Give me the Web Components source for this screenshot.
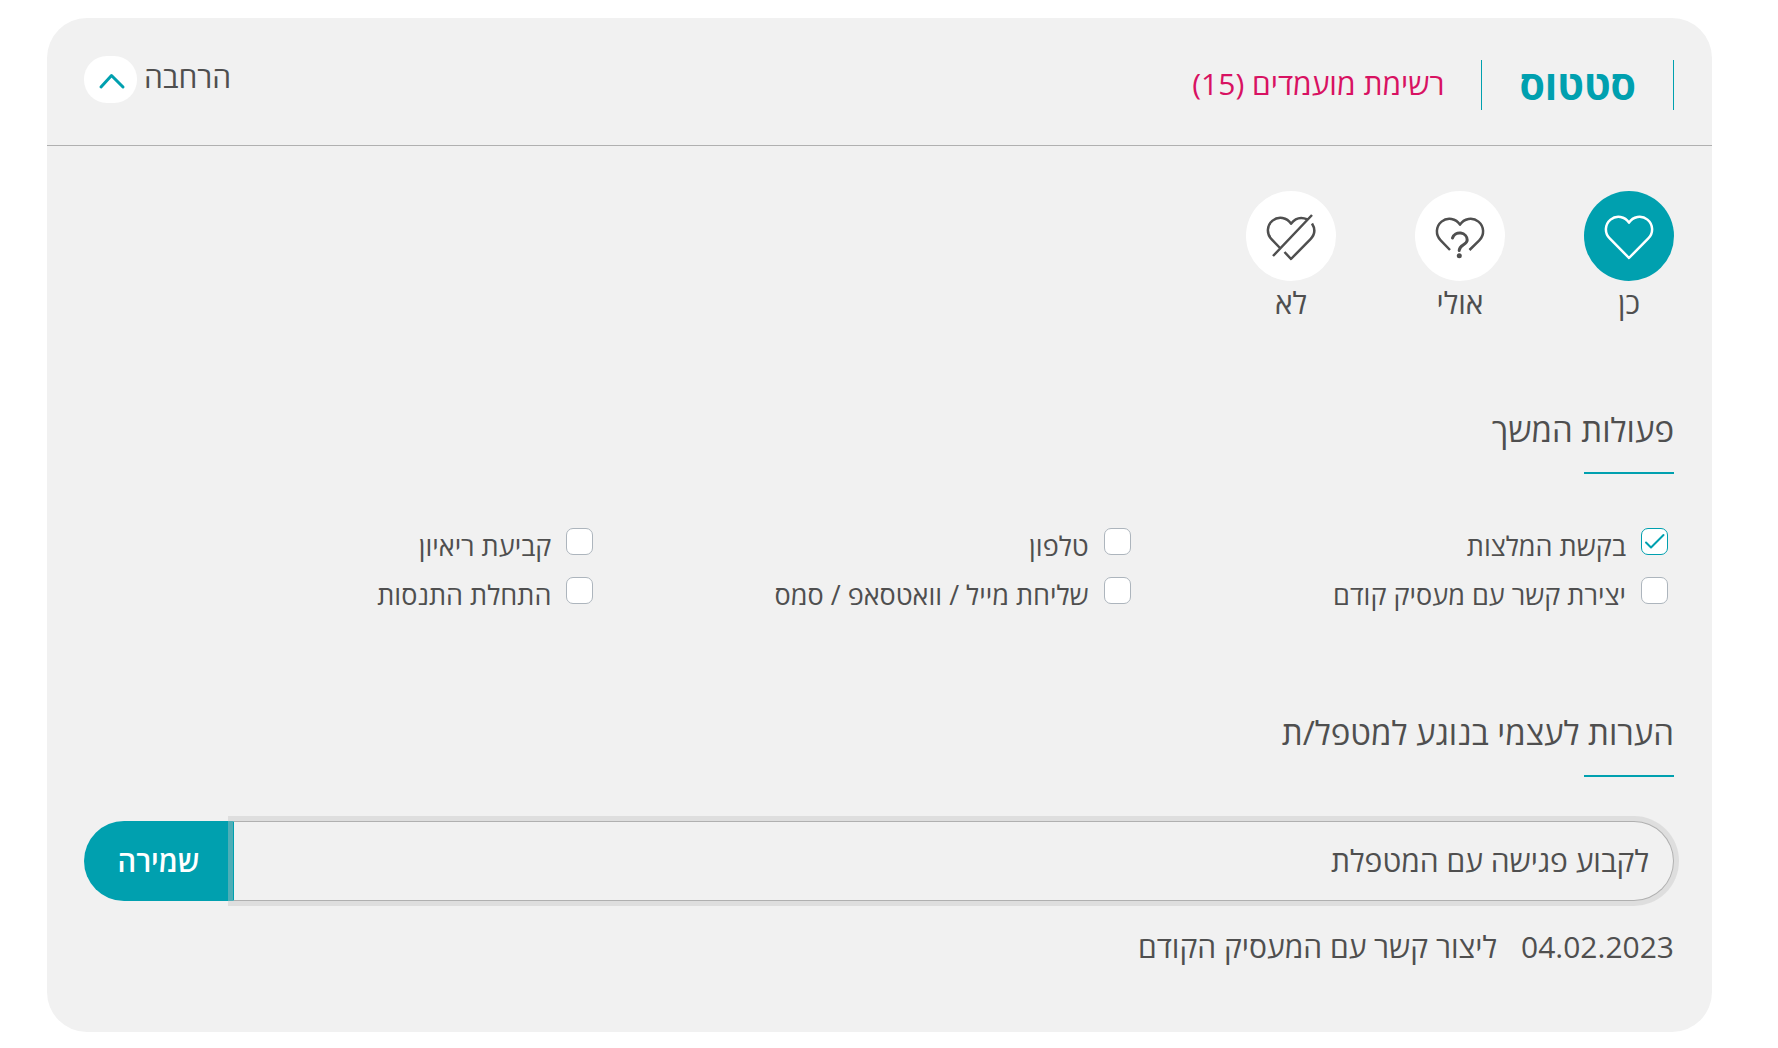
<!DOCTYPE html>
<html lang="he" dir="rtl">
<head>
<meta charset="utf-8">
<meta name="viewport" content="width=device-width, initial-scale=1">
<title>סטטוס</title>
<style>
  :root {
    --teal: #00a0af;
    --pink: #d81262;
    --ink: #4f4f4f;
    --panel: #f1f1f1;
    --line: #b0b0b0;
  }
  body {
    margin: 18px 66px 16px 47px;
    background: #fff;
    color: var(--ink);
    font-family: "Open Sans", "Liberation Sans", sans-serif;
    font-size: 30px;
    line-height: 36px;
  }
</style>
</head>
<body>
<status-panel>
  <panel-header slot="header" heading="סטטוס" link="רשימת מועמדים (15)" toggle="הרחבה"></panel-header>
  <choice-group></choice-group>
  <panel-section heading="פעולות המשך">
    <task-list>
      <task-check label="בקשת המלצות" checked></task-check>
      <task-check label="טלפון"></task-check>
      <task-check label="קביעת ריאיון"></task-check>
      <task-check label="יצירת קשר עם מעסיק קודם"></task-check>
      <task-check label="שליחת מייל / וואטסאפ / סמס"></task-check>
      <task-check label="התחלת התנסות"></task-check>
    </task-list>
  </panel-section>
  <panel-section heading="הערות לעצמי בנוגע למטפל/ת">
    <note-form value="לקבוע פגישה עם המטפלת" action="שמירה"></note-form>
    <note-entry date="04.02.2023">ליצור קשר עם המעסיק הקודם</note-entry>
  </panel-section>
</status-panel>

<script>
  class Base extends HTMLElement {
    connectedCallback() {
      if (this.shadowRoot) return;
      this.attachShadow({ mode: 'open' }).innerHTML =
        '<style>*{box-sizing:border-box}button,input{font:inherit;color:inherit;margin:0}svg{display:block;fill:none;stroke-linecap:round;stroke-linejoin:round}</style>' + this.render();
    }
    attr(name) { return this.getAttribute(name) || ''; }
  }

  customElements.define('status-panel', class extends Base {
    render() {
      return `<style>
        :host { display: block; background: var(--panel); border-radius: 40px; }
        main { display: flex; flex-direction: column; padding: 45px 38px 67px 37px; }
      </style>
      <slot name="header"></slot><main><slot></slot></main>`;
    }
  });

  customElements.define('panel-header', class extends Base {
    render() {
      return `<style>
        :host { display: block; border-bottom: 1px solid var(--line); }
        header { display: flex; justify-content: space-between; align-items: flex-start; padding: 38px 38px 35px 37px; }
        .titles { display: flex; align-items: center; padding-top: 4px; }
        h1 { margin: 0; font-size: 41px; font-weight: 700; line-height: 48px; padding: 0 37px 2px; color: var(--teal);
             border-inline: 1px solid var(--teal); }
        a { color: var(--pink); text-decoration: none; padding-inline-start: 37px; padding-bottom: 2px; }
        button { display: flex; gap: 7px; padding: 0; border: 0; background: none; cursor: pointer; }
        .pill { background: #fff; border-radius: 23px; }
        .pill svg { width: 53px; height: 47px; stroke: var(--teal); stroke-width: 3; }
        .label { line-height: 41px; }
      </style>
      <header>
        <div class="titles"><h1>${this.attr('heading')}</h1><a href="#list">${this.attr('link')}</a></div>
        <button type="button" aria-expanded="true"><span class="label">${this.attr('toggle')}</span>
          <span class="pill"><svg viewBox="0 0 53 47"><path d="M17 31 27.500 19.500 39 31"/></svg></span></button>
      </header>`;
    }
  });

  customElements.define('choice-group', class extends Base {
    render() {
      const items = [
        ['כן', true, '<path d="M45 67 25.700 47.300A12.500 12.500 0 1 1 45 31.700A12.500 12.500 0 1 1 64.300 47.300Z"/>'],
        ['אולי', false, '<path stroke-linecap="butt" d="M35 59 25.700 49.300A12.500 12.500 0 1 1 45 33.700A12.500 12.500 0 1 1 64.300 49.300L54.500 59"/><path d="M37.500 47A7.500 7 0 0 1 52.200 49C52.200 54 44.200 53.500 44.200 59.500" stroke-width="3"/><circle cx="44.300" cy="64.700" r="2.500" fill="currentColor" stroke="none"/>'],
        ['לא', false, '<path stroke-linecap="butt" d="M34 57 25.700 48.300A12.500 12.500 0 1 1 45 32.700C49 27.500 55 25.500 61.500 28.500M66 32.500C69.500 38 69 43.500 64.300 48.300L45 68 38.500 61M27 65 66 24"/>']
      ];
      return `<style>
        :host { display: flex; gap: 79px; }
        button { display: flex; flex-direction: column; align-items: center; gap: 4px; width: 90px; padding: 0; border: 0; background: none; cursor: pointer; }
        svg { width: 90px; height: 90px; border-radius: 50%; background: #fff; stroke: currentColor; stroke-width: 2.500; }
        [aria-pressed="true"] svg { background: var(--teal); stroke: #fff; }
      </style>` + items.map(([t, on, icon]) =>
        `<button type="button" aria-pressed="${on}"><svg viewBox="0 0 90 90">${icon}</svg><span>${t}</span></button>`).join('');
    }
  });

  customElements.define('panel-section', class extends Base {
    render() {
      return `<style>
        :host { display: block; margin-top: 89px; }
        h2 { margin: 0; font-size: 33px; font-weight: 400; line-height: 40px; }
        h2::after { content: ""; display: block; width: 90px; height: 2px; margin-top: 22px; background: var(--teal); }
      </style><h2>${this.attr('heading')}</h2><slot></slot>`;
    }
  });

  customElements.define('task-list', class extends Base {
    render() {
      return `<style>
        :host { display: grid; grid-template-columns: repeat(3, 1fr); row-gap: 9px; margin: 54px -11px 0; padding-bottom: 7px; }
      </style><slot></slot>`;
    }
  });

  customElements.define('task-check', class extends Base {
    render() {
      return `<style>
        :host { display: block; padding-inline: 17px; font-size: 27px; }
        label { display: flex; align-items: flex-start; gap: 15px; height: 40px; line-height: 36px; cursor: pointer; }
        .box { display: grid; flex: none; }
        .box > * { grid-area: 1 / 1; width: 27px; height: 27px; }
        input { appearance: none; background: #fff; border: 1px solid #adb5bd; border-radius: 7px; }
        svg { stroke: var(--teal); stroke-width: 2; visibility: hidden; pointer-events: none; z-index: 1; }
        input:checked { border-color: var(--teal); }
        input:checked + svg { visibility: visible; }
      </style>
      <label><span class="box"><input type="checkbox" ${this.hasAttribute('checked') ? 'checked' : ''}>
        <svg viewBox="0 0 27 27"><path d="M5 14.500 10 19.500 22.500 7"/></svg></span><span>${this.attr('label')}</span></label>`;
    }
  });

  customElements.define('note-form', class extends Base {
    render() {
      return `<style>
        :host { display: block; margin-top: 44px; }
        form { display: flex; margin: 0; }
        input { flex: 1; min-width: 0; height: 80px; padding: 0 24px 2px; border: 1px solid var(--line); border-inline-end-color: var(--teal);
                border-radius: 0 40px 40px 0; background: var(--panel); outline: 0; box-shadow: 0 0 0 5px rgba(196, 196, 196, .4); position: relative; z-index: 1; }
        button { width: 149px; height: 80px; padding: 0; border: 0; border-radius: 40px 0 0 40px; background: var(--teal); color: #fff; font-size: 29px; font-weight: 600; cursor: pointer; }
      </style>
      <form><input type="text" aria-label="הערה" value="${this.attr('value')}"><button type="button">${this.attr('action')}</button></form>`;
    }
  });

  customElements.define('note-entry', class extends Base {
    render() {
      return `<style>
        :host { display: flex; gap: 24px; margin-top: 28px; }
      </style><time>${this.attr('date')}</time><span><slot></slot></span>`;
    }
  });
</script>
</body>
</html>
